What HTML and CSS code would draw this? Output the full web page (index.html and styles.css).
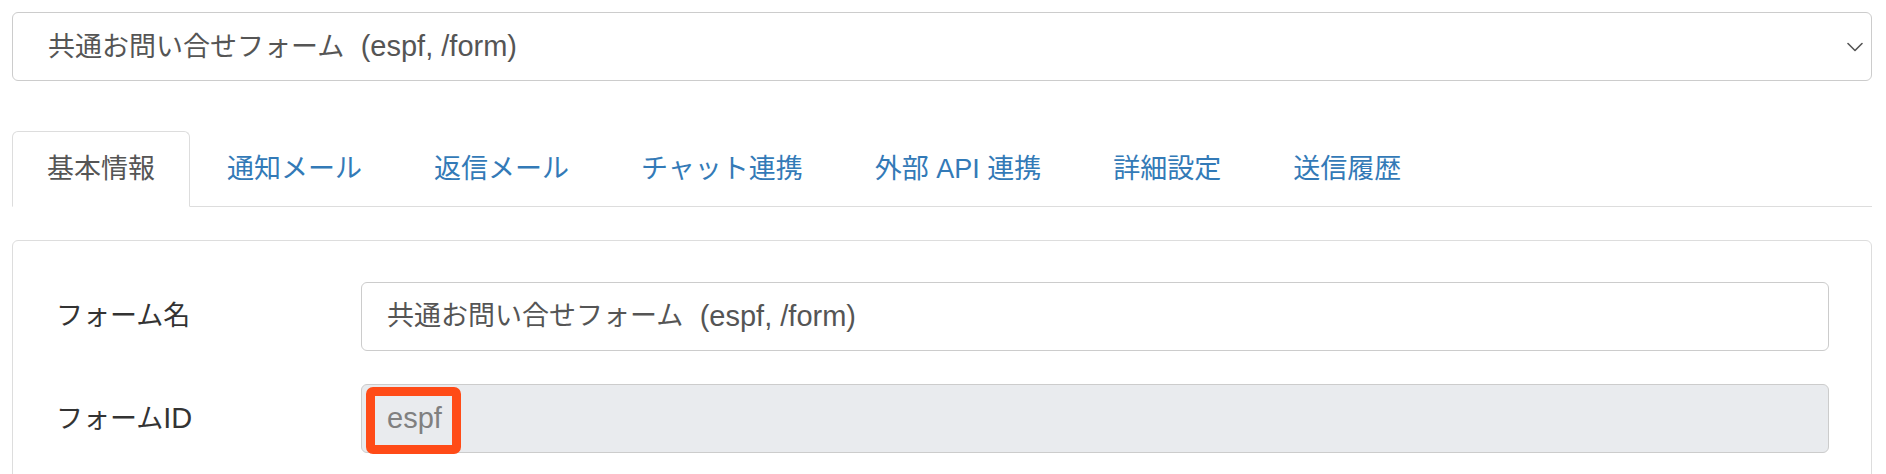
FILE: index.html
```html
<!DOCTYPE html>
<html lang="ja">
<head>
<meta charset="utf-8">
<title>フォーム設定</title>
<link rel="stylesheet" href="styles.css">
</head>
<body>
<div class="page">
  <div class="select">
    <span class="select-text">共通お問い合せフォーム <span class="lat paren">(espf, /form)</span></span>
    <svg class="chevron" width="16" height="10" viewBox="0 0 16 10" aria-hidden="true">
      <polyline points="1,1.5 8,8.5 15,1.5" fill="none" stroke="#555" stroke-width="1.6" stroke-linecap="round" stroke-linejoin="round"/>
    </svg>
  </div>

  <ul class="tabs">
    <li class="tab active"><span>基本情報</span></li>
    <li class="tab"><a href="#">通知メール</a></li>
    <li class="tab"><a href="#">返信メール</a></li>
    <li class="tab"><a href="#">チャット連携</a></li>
    <li class="tab"><a href="#">外部 API 連携</a></li>
    <li class="tab"><a href="#">詳細設定</a></li>
    <li class="tab"><a href="#">送信履歴</a></li>
  </ul>

  <div class="panel">
    <div class="row">
      <div class="label">フォーム名</div>
      <div class="field">
        <div class="input">共通お問い合せフォーム <span class="lat paren">(espf, /form)</span></div>
      </div>
    </div>
    <div class="row">
      <div class="label">フォーム<span class="lat">ID</span></div>
      <div class="field">
        <div class="input disabled"><span class="lat">espf</span></div>
        <span class="mark"></span>
      </div>
    </div>
  </div>
</div>
</body>
</html>
```

FILE: styles.css
```css
html, body {
  margin: 0;
  padding: 0;
  background: #fff;
}

body {
  font-family: "Liberation Sans", "Noto Sans CJK JP", sans-serif;
  font-size: 27px;
  color: #333;
}

.lat {
  font-size: 29px;
}

.paren {
  margin-left: 9px;
}

.page {
  padding: 12px 14px 0 12px;
}

.select {
  box-sizing: border-box;
  height: 69px;
  border: 1px solid #ccc;
  border-radius: 6px;
  display: flex;
  align-items: center;
  justify-content: space-between;
  padding: 0 8px 0 35px;
  color: #555;
  line-height: 1;
}

.chevron {
  display: block;
}

.tabs {
  list-style: none;
  margin: 50px 0 0;
  padding: 0;
  display: flex;
  border-bottom: 1px solid #ddd;
}

.tab {
  box-sizing: border-box;
  height: 76px;
  padding: 0 34px;
  margin: 0 2px -1px 0;
  border: 1px solid transparent;
  border-radius: 6px 6px 0 0;
  display: flex;
  align-items: center;
  line-height: 1;
}

.tab a {
  color: #337ab7;
  text-decoration: none;
}

.tab.active {
  border-color: #ddd;
  border-bottom-color: #fff;
  background: #fff;
  color: #555;
}

.panel {
  margin-top: 33px;
  border: 1px solid #ddd;
  border-radius: 6px;
  padding: 41px 42px 40px 43px;
  display: flex;
  flex-direction: column;
  gap: 33px;
}

.row {
  display: grid;
  grid-template-columns: 305px 1fr;
  align-items: center;
}

.label {
  color: #333;
  line-height: 1;
}

.field {
  position: relative;
}

.input {
  box-sizing: border-box;
  height: 69px;
  border: 1px solid #ccc;
  border-radius: 6px;
  padding: 0 25px;
  display: flex;
  align-items: center;
  color: #555;
  line-height: 1;
  background: #fff;
  white-space: pre;
}

.input.disabled {
  background: #e9ebee;
  color: #808080;
}

.mark {
  position: absolute;
  left: 5px;
  top: 3px;
  width: 95px;
  height: 67px;
  box-sizing: border-box;
  border: 9px solid #ff4b17;
  border-radius: 7px;
}
```
